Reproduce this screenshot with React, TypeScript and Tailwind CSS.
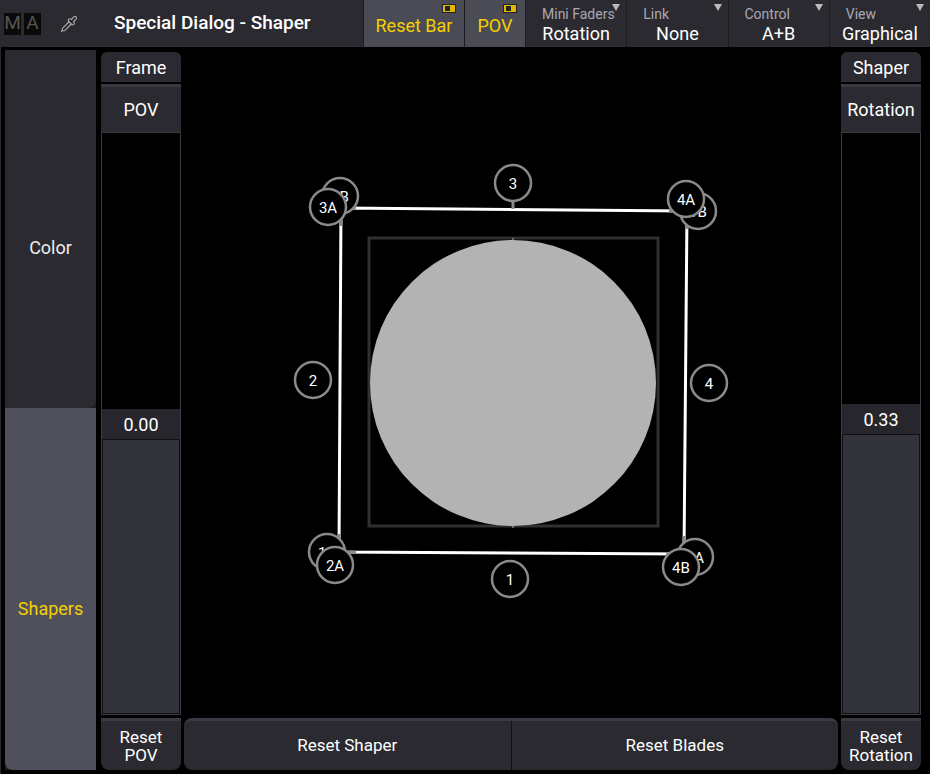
import React from "react";
import { Pipette } from "lucide-react";

const F = { fontFamily: "Roboto, 'Liberation Sans', sans-serif" };

function Handle({ x, y, t }: { x: number; y: number; t: string }) {
  return (
    <g>
      <circle cx={x} cy={y} r={18} fill="#000" stroke="#8a8a8a" strokeWidth={2.5} />
      <text x={x} y={y + 5.5} textAnchor="middle" fontSize={15} fill="#fff" style={F}>
        {t}
      </text>
    </g>
  );
}

function Canvas() {
  return (
    <svg viewBox="183 47 654 666" className="absolute inset-0 w-full h-full">
      <rect x={368} y={237} width={289} height={288} fill="none" stroke="#303030" strokeWidth={3} />
      <circle cx={512} cy={382} r={143} fill="#b3b3b3" />
      <line x1={512} y1={237} x2={512} y2={527} stroke="#b3b3b3" strokeWidth={1} />
      <polygon points="340,207 686,210 683,553 338,551" fill="none" stroke="#fff" strokeWidth={3} />
      <g stroke="#8a8a8a" strokeWidth={3}>
        <line x1={340} y1={207} x2={355} y2={207} />
        <line x1={340} y1={207} x2={340} y2={225} />
        <line x1={686} y1={210} x2={668} y2={210} />
        <line x1={686} y1={210} x2={686} y2={228} />
        <line x1={338} y1={551} x2={338} y2={533} />
        <line x1={338} y1={551} x2={355} y2={551} />
        <line x1={683} y1={553} x2={683} y2={535} />
        <line x1={683} y1={553} x2={665} y2={553} />
        <line x1={512} y1={200} x2={512} y2={208} />
      </g>
      <Handle x={512} y={182} t="3" />
      <Handle x={312} y={379} t="2" />
      <Handle x={708} y={382} t="4" />
      <Handle x={509} y={578} t="1" />
      <Handle x={339} y={195} t="2B" />
      <Handle x={327} y={206} t="3A" />
      <Handle x={697} y={210} t="1B" />
      <Handle x={685} y={198} t="4A" />
      <Handle x={326} y={551} t="1B" />
      <Handle x={334} y={564} t="2A" />
      <Handle x={694} y={556} t="1A" />
      <Handle x={680} y={566} t="4B" />
    </svg>
  );
}

function Drop({ label, value }: { label: string; value: string }) {
  return (
    <div className="relative flex-1 flex flex-col justify-center px-2 border-l border-[#1c1c20] bg-[#2a2a30]">
      <div className="absolute top-1 right-1.5 w-0 h-0 border-l-[4px] border-r-[4px] border-t-[7px] border-l-transparent border-r-transparent border-t-[#bbb]" />
      <div className="text-[14px] text-[#a9a9b0] leading-4 pl-2 mt-1">{label}</div>
      <div className="text-[18px] text-white leading-6 text-center">{value}</div>
    </div>
  );
}

function Toggle({ label, w }: { label: string; w: string }) {
  return (
    <div className={`relative ${w} bg-[#4b4b55] border-l border-[#1c1c20] flex items-center justify-center text-[18px] text-[#f4d000]`}>
      <div className="absolute top-1 right-2 w-[14px] h-[9px] bg-[#e0b800] border border-[#222] flex items-center pl-[2px]">
        <div className="w-[5px] h-[5px] bg-[#222]" />
      </div>
      <span className="mt-1">{label}</span>
    </div>
  );
}

export default function App() {
  return (
    <div className="w-[930px] h-[774px] bg-[#202024] flex flex-col overflow-hidden text-white" style={F}>
      <div className="h-[47px] flex bg-[#2a2a30]">
        <div className="flex items-center pl-[4px] gap-[3px] w-[114px]">
          <div className="w-[17px] h-[22px] bg-[#0a0a0a] text-[#555] text-[19px] flex items-center justify-center">M</div>
          <div className="w-[17px] h-[22px] bg-[#0a0a0a] text-[#555] text-[19px] flex items-center justify-center">A</div>
          <Pipette className="ml-4 w-[18px] h-[18px] text-[#aaa]" strokeWidth={1.5} />
        </div>
        <div className="w-[249px] flex items-center text-[19px] font-medium">Special Dialog - Shaper</div>
        <Toggle label="Reset Bar" w="w-[101px]" />
        <Toggle label="POV" w="w-[61px]" />
        <Drop label="Mini Faders" value="Rotation" />
        <Drop label="Link" value="None" />
        <Drop label="Control" value="A+B" />
        <Drop label="View" value="Graphical" />
      </div>
      <div className="flex-1 flex bg-black pl-[4px] pr-[9px] pb-[4px] border-l border-[#2a2a30]">
        <div className="w-[91px] flex flex-col mt-[3px] bg-[#202024]">
          <div className="h-[358px] bg-[#2a2a30] rounded-br-lg flex items-center justify-center pt-[36px] text-[18px] text-[#eee]">Color</div>
          <div className="flex-1 bg-[#50505c] rounded-bl-lg flex items-center justify-center pt-[38px] text-[18px] text-[#f4d000]">Shapers</div>
        </div>
        <div className="w-[80px] ml-[5px] flex flex-col mt-[5px]">
          <div className="h-[30px] bg-[#2a2a30] rounded-t-md flex items-center justify-center text-[18px]">Frame</div>
          <div className="h-[48px] mt-[2px] bg-[#2a2a30] border-t-[3px] border-[#3a3a42] flex items-center justify-center text-[18px]">POV</div>
          <div className="flex-1 border border-[#3a3a42] flex flex-col bg-black">
            <div className="h-[276px]" />
            <div className="h-[30px] bg-[#26262c] flex items-center justify-center text-[18px]">0.00</div>
            <div className="flex-1 bg-[#33333c] border border-[#111]" />
          </div>
          <div className="h-[52px] mt-[3px] bg-[#2a2a30] rounded-b-lg border-t-[3px] border-[#3a3a42] flex flex-col items-center justify-center text-[17px] leading-[18px]">
            <span>Reset</span><span>POV</span>
          </div>
        </div>
        <div className="flex-1 flex flex-col ml-[3px] mr-[3px]">
          <div className="flex-1 relative">
            <Canvas />
          </div>
          <div className="h-[52px] mt-[3px] flex bg-[#2a2a30] rounded-lg border-t-[3px] border-[#3a3a42]">
            <div className="flex-1 flex items-center justify-center text-[17px] border-r border-[#111]">Reset Shaper</div>
            <div className="flex-1 flex items-center justify-center text-[17px]">Reset Blades</div>
          </div>
        </div>
        <div className="w-[80px] flex flex-col mt-[5px]">
          <div className="h-[30px] bg-[#2a2a30] rounded-t-md flex items-center justify-center text-[18px]">Shaper</div>
          <div className="h-[48px] mt-[2px] bg-[#2a2a30] border-t-[3px] border-[#3a3a42] flex items-center justify-center text-[18px]">Rotation</div>
          <div className="flex-1 border border-[#3a3a42] flex flex-col bg-black">
            <div className="h-[271px]" />
            <div className="h-[30px] bg-[#26262c] flex items-center justify-center text-[18px]">0.33</div>
            <div className="flex-1 bg-[#33333c] border border-[#111]" />
          </div>
          <div className="h-[52px] mt-[3px] bg-[#2a2a30] rounded-b-lg border-t-[3px] border-[#3a3a42] flex flex-col items-center justify-center text-[17px] leading-[18px]">
            <span>Reset</span><span>Rotation</span>
          </div>
        </div>
      </div>
    </div>
  );
}
